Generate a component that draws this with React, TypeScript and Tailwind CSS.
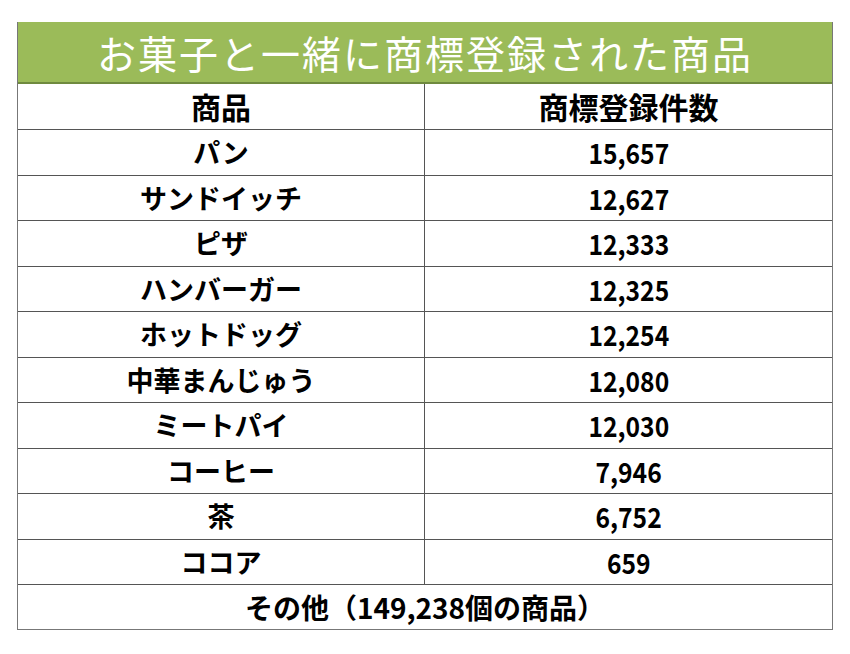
const rows = [
  ["パン", "15,657"],
  ["サンドイッチ", "12,627"],
  ["ピザ", "12,333"],
  ["ハンバーガー", "12,325"],
  ["ホットドッグ", "12,254"],
  ["中華まんじゅう", "12,080"],
  ["ミートパイ", "12,030"],
  ["コーヒー", "7,946"],
  ["茶", "6,752"],
  ["ココア", "659"],
]

export default function App() {
  return (
    <div
      className="w-[850px] h-[654px] bg-white pt-[22px] pl-[17px]"
      style={{ fontFamily: '"Noto Sans CJK JP", "Noto Sans", sans-serif' }}
    >
      <div className="w-[816px] border-x border-b border-[#777]">
        <div className="h-[62px] bg-[#9bbb59] border-b-2 border-[#6f8a3f] flex items-center justify-center text-white text-[39px] leading-none tracking-[2px]">
          お菓子と一緒に商標登録された商品
        </div>
        <div className="flex h-[46px] border-b border-[#555] text-[30px] font-bold text-black">
          <div className="w-1/2 border-r border-[#555] flex items-center justify-center">商品</div>
          <div className="w-1/2 flex items-center justify-center">商標登録件数</div>
        </div>
        {rows.map(([name, count]) => (
          <div key={name} className="flex h-[45.5px] border-b border-[#555] text-[27px] font-bold text-black">
            <div className="w-1/2 border-r border-[#555] flex items-center justify-center">{name}</div>
            <div className="w-1/2 flex items-center justify-center">
              <span className="inline-block text-[28px] scale-x-[0.88]">{count}</span>
            </div>
          </div>
        ))}
        <div className="h-[44px] flex items-center justify-center text-[28px] font-bold text-black">
          その他（149,238個の商品）
        </div>
      </div>
    </div>
  )
}
